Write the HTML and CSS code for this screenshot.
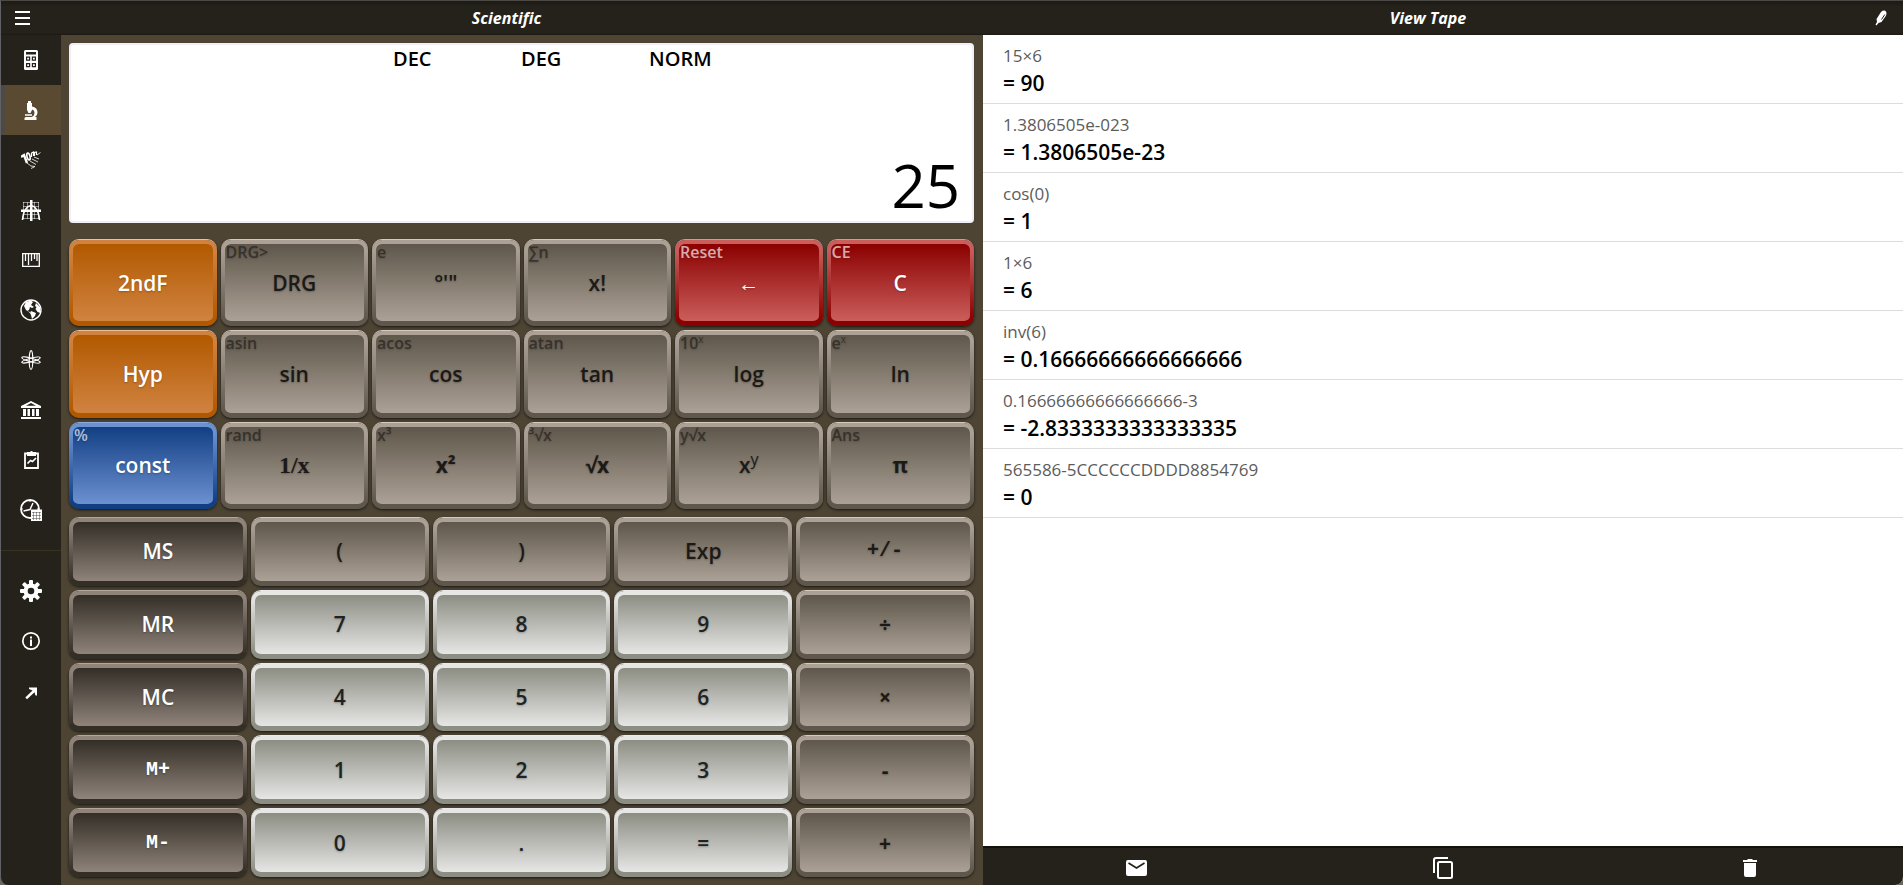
FILE: index.html
```html
<!DOCTYPE html>
<html lang="en">
<head>
  <meta charset="UTF-8" />
  <title>Scientific Calculator</title>
  <link rel="stylesheet" href="styles.css">
</head>
<body>
<div class="app">

  <header class="topbar">
    <div class="topbar-left">
      <button class="icon-btn menu" aria-label="Menu">
        <svg width="15" height="14" viewBox="0 0 15 14"><path d="M0 0h15v2H0zM0 6h15v2H0zM0 12h15v2H0z"/></svg>
      </button>
      <h1>Scientific</h1>
    </div>
    <div class="topbar-right">
      <h2>View Tape</h2>
      <button class="icon-btn edit" aria-label="Edit">
        <svg width="12" height="16" viewBox="0 0 12 16"><path d="M6 2Q9-.5 11 1.500q1 2-.2 4.500L6.500 12l-3 1L1.500 15.500.5 14.500 2 12 1.500 9z"/><path d="M9.800 4.500 6.500 9.500" stroke="#25221b" fill="none"/></svg>
      </button>
    </div>
  </header>

  <div class="main">
    <nav class="sidebar">
      <a href="#" aria-label="Standard">
        <svg width="14" height="20" viewBox="0 0 14 20"><rect width="14" height="20" rx="1.500"/><path class="hole" d="M2 2h10v2.500H2zM2 6.500h4.200v4.200H2zM7.800 6.500H12v4.200H7.800zM2 13h4.200v4.200H2zM7.800 13H12v4.200H7.800z"/><path d="M3.200 7.700h1.800v1.800H3.200zM9 7.700h1.800v1.800H9zM3.200 14.200h1.800V16H3.200zM9 14.200h1.800V16H9z"/></svg>
      </a>
      <a href="#" class="active" aria-label="Scientific">
        <svg width="14" height="19" viewBox="0 0 14 19"><path d="M4 0h3v2h1v7L6.500 12h-2L3 9V2h1z"/><path d="M8 5.500q5.500 1 5.500 6 0 3-2.500 4.500h1.500v3H.5v-2l1-1h6Q10.500 15 10.500 11.500 10.500 9 8 8.500zM1 13.200h7v1.500H1z"/></svg>
      </a>
      <a href="#" aria-label="Powers">
        <svg width="20" height="18" viewBox="0 0 20 18"><g class="line"><path d="M0 6l3-2 3 8" stroke-width="2.400"/><ellipse cx="7.500" cy="5.500" rx="1.500" ry="3.500" transform="rotate(-14 7.500 5.500)" stroke-width="1.700"/><path d="M10.500 6V2l2-1v4M13.500 5V1.500l2-.5v3" stroke-width="1.200"/><path d="M16 4l3.500-2.500M6 12l4 3 4 .5-4 2M9 10l6 3.500M11 8l6 3M13 6l5 2" stroke-width=".8"/></g></svg>
      </a>
      <a href="#" aria-label="Graphing">
        <svg width="20" height="21" viewBox="0 0 20 21"><path class="line" d="M2 2.500h16M2 6.500h16M2 14.500h16M2 18.500h16M2.500 2v17M6.500 2v17M13.500 2v17M17.500 2v17" stroke-width=".5"/><path class="line" d="M1.500 20C3 1 17 1 18.500 20" stroke-width="1.600"/><path d="M9 0h2.500v21H9zM0 9.500h20V12H0z"/></svg>
      </a>
      <a href="#" aria-label="Units">
        <svg width="18" height="14" viewBox="0 0 18 14"><path class="line" d="M.7.700h16.600v12.600H.7zM3.500 1v7M6.500 1v11M9.500 1v7M12.500 1v5M15 1v7" stroke-width="1.300"/></svg>
      </a>
      <a href="#" aria-label="World">
        <svg width="22" height="22" viewBox="0 0 22 22"><circle class="line" cx="11" cy="11" r="10" stroke-width="1.400"/><path d="M6 3l5-1.500 2 1.500-2 3 3 2-2 1-2-1-1 3-2 1 3 1v1L6 11 4 7zM11 12l5 2-1 3-3 3-1-4-1-2zM16 4l4 4 .5 6-3-1-2-3 1-2-1.500-1z"/></svg>
      </a>
      <a href="#" aria-label="Constants">
        <svg width="20" height="20" viewBox="0 0 20 20"><g class="line" stroke-width="1.200"><ellipse cx="10" cy="10" rx="1.800" ry="9.300"/><ellipse cx="10" cy="10" rx="1.800" ry="9.500" transform="rotate(75 10 10)"/><ellipse cx="10" cy="10" rx="1.800" ry="9.500" transform="rotate(-75 10 10)"/></g></svg>
      </a>
      <a href="#" aria-label="Finance">
        <svg width="20" height="18" viewBox="0 0 20 18"><path d="M10 0l10 5v2H0V5zM2 8h3v7H2zM6.500 8h2.500v7H6.500zM11 8h2.500v7H11zM15 8h3v7h-3zM0 16h20v2H0z"/><path class="hole" d="M10 2l5 2.800H5z"/></svg>
      </a>
      <a href="#" aria-label="Statistics">
        <svg width="15" height="18" viewBox="0 0 15 18"><path class="line" d="M1 2.500h13v14.500H1z" stroke-width="1.800"/><path d="M3 1h3q1.500-2 3 0h3v4H3z"/><path class="line" d="M3.500 12.500l3-3 2 1 3.500-3.500" stroke-width="1.700"/></svg>
      </a>
      <a href="#" aria-label="Date and time">
        <svg width="22" height="22" viewBox="0 0 22 22"><circle class="line" cx="10" cy="10" r="9" stroke-width="1.800"/><path class="line" d="M13 4l-3 6.500-6.500 1.500" stroke-width="1.500"/><path class="line" d="M10 2v1M2 10h1M17 10h1"/><path d="M11 10.500h11V22H11z"/><path class="grid-line" d="M13.500 13v8M16.500 13v8M19.500 13v8M12 13.500h9M12 16.500h9M12 19.500h9" stroke-width=".4"/></svg>
      </a>
      <hr>
      <a href="#" aria-label="Settings">
        <svg width="22" height="22" viewBox="0 0 22 22"><circle cx="11" cy="11" r="7.500"/><g id="teeth"><rect x="9" y="0" width="4" height="22" rx="1"/><rect x="0" y="9" width="22" height="4" rx="1"/></g><use href="#teeth" transform="rotate(45 11 11)"/><circle class="hole" cx="11" cy="11" r="3.300"/></svg>
      </a>
      <a href="#" aria-label="About">
        <svg width="20" height="20" viewBox="0 0 20 20"><circle class="line" cx="10" cy="10" r="8.200" stroke-width="1.700"/><path d="M9 5.500h2v2H9zM9 8.500h2V15H9z"/></svg>
      </a>
      <a href="#" class="share" aria-label="Share">
        <svg width="14" height="14" viewBox="0 0 14 14"><path d="M5 1.500h8v8h-1.500l-1-3.200-7.500 7L1.300 11.500l7.200-7L5 3z"/></svg>
      </a>
    </nav>

    <main class="calc">
      <section class="display">
        <div class="modes"><span>DEC</span><span>DEG</span><span>NORM</span></div>
        <output class="value">25</output>
      </section>

      <section class="keys functions">
        <button class="key orange">2ndF</button>
        <button class="key"><span class="second">DRG&gt;</span>DRG</button>
        <button class="key"><span class="second">e</span>°'"</button>
        <button class="key"><span class="second">∑n</span>x!</button>
        <button class="key red"><span class="second">Reset</span>←</button>
        <button class="key red"><span class="second">CE</span>C</button>

        <button class="key orange">Hyp</button>
        <button class="key"><span class="second">asin</span>sin</button>
        <button class="key"><span class="second">acos</span>cos</button>
        <button class="key"><span class="second">atan</span>tan</button>
        <button class="key"><span class="second">10<sup>x</sup></span>log</button>
        <button class="key"><span class="second">e<sup>x</sup></span>ln</button>

        <button class="key blue"><span class="second">%</span>const</button>
        <button class="key serif"><span class="second">rand</span>1/x</button>
        <button class="key bold"><span class="second">x³</span>x²</button>
        <button class="key bold"><span class="second">³√x</span>√x</button>
        <button class="key"><span class="second">y√x</span>x<sup>y</sup></button>
        <button class="key bold"><span class="second">Ans</span>π</button>
      </section>

      <section class="keys numbers">
        <button class="key memory">MS</button>
        <button class="key">(</button>
        <button class="key">)</button>
        <button class="key">Exp</button>
        <button class="key mono">+/-</button>

        <button class="key memory">MR</button>
        <button class="key digit">7</button>
        <button class="key digit">8</button>
        <button class="key digit">9</button>
        <button class="key bold">÷</button>

        <button class="key memory">MC</button>
        <button class="key digit">4</button>
        <button class="key digit">5</button>
        <button class="key digit">6</button>
        <button class="key bold">×</button>

        <button class="key memory mono">M+</button>
        <button class="key digit">1</button>
        <button class="key digit">2</button>
        <button class="key digit">3</button>
        <button class="key bold">-</button>

        <button class="key memory mono">M-</button>
        <button class="key digit">0</button>
        <button class="key digit">.</button>
        <button class="key digit">=</button>
        <button class="key bold">+</button>
      </section>
    </main>

    <aside class="tape">
      <ul>
        <li><span>15×6</span><strong>= 90</strong></li>
        <li><span>1.3806505e-023</span><strong>= 1.3806505e-23</strong></li>
        <li><span>cos(0)</span><strong>= 1</strong></li>
        <li><span>1×6</span><strong>= 6</strong></li>
        <li><span>inv(6)</span><strong>= 0.16666666666666666</strong></li>
        <li><span>0.16666666666666666-3</span><strong>= -2.8333333333333335</strong></li>
        <li><span>565586-5CCCCCCDDDD8854769</span><strong>= 0</strong></li>
      </ul>
      <footer class="tape-bar">
        <button class="icon-btn" aria-label="Mail">
          <svg width="21" height="16" viewBox="0 0 21 16"><rect width="21" height="16" rx="2"/><path class="grid-line" d="M2.500 3l8 5 8-5" stroke-width="1.700"/></svg>
        </button>
        <button class="icon-btn" aria-label="Copy">
          <svg width="20" height="22" viewBox="0 0 20 22"><path class="line" d="M1 16V3q0-2 2-2h12" stroke-width="2"/><rect class="line" x="5" y="5" width="14" height="16" rx="1.500" stroke-width="2"/></svg>
        </button>
        <button class="icon-btn" aria-label="Delete">
          <svg width="14" height="18" viewBox="0 0 14 18"><path d="M0 1h4l1-1h4l1 1h4v2H0zM1 4h12v12q0 2-2 2H3q-2 0-2-2z"/></svg>
        </button>
      </footer>
    </aside>
  </div>

</div>
</body>
</html>
```

FILE: styles.css
```css
* {
  box-sizing: border-box;
}

body {
  margin: 0;
  background: #6b6660;
  font-family: 'Segoe UI', 'Open Sans', 'Noto Sans', sans-serif;
  color: #000;
}

.app {
  display: flex;
  flex-direction: column;
  height: 100vh;
  min-height: 600px;
  border-top: 1px solid #4a4945;
  border-left: 1px solid #626266;
  border-radius: 0 0 8px 8px;
  overflow: hidden;
}

svg {
  display: block;
  fill: #fff;
}

.line {
  fill: none;
  stroke: #fff;
}

.hole {
  fill: #25221b;
}

.grid-line {
  fill: none;
  stroke: #25221b;
}

.icon-btn {
  display: flex;
  align-items: center;
  justify-content: center;
  padding: 0;
  border: none;
  background: none;
  cursor: pointer;
}

/* header */

.topbar {
  display: grid;
  grid-template-columns: 60px minmax(0, 922fr) minmax(0, 920fr);
  height: 34px;
  flex: none;
  background: linear-gradient(#1d1a14, #25221b 6px, #25221b 32px, #1b1812);
}

.topbar-left,
.topbar-right {
  display: flex;
  align-items: center;
}

.topbar-left {
  grid-column: 1 / 3;
  padding-left: 14px;
}

.topbar-right {
  padding-right: 14px;
}

.topbar h1,
.topbar h2 {
  flex: 1;
  margin: 0;
  text-align: center;
  font-size: 16px;
  font-weight: 700;
  font-style: italic;
  line-height: 34px;
  color: #fff;
}

.edit {
  width: 16px;
}

.main {
  display: grid;
  grid-template-columns: 60px minmax(0, 922fr) minmax(0, 920fr);
  flex: 1;
  min-height: 0;
}

/* sidebar */

.sidebar {
  background: #25221b;
}

.sidebar a {
  display: flex;
  align-items: center;
  justify-content: center;
  height: 50px;
}

.sidebar a.active {
  background: linear-gradient(to right, #4d4a45 4px, #5a4a31 4px);
}

.sidebar a.share {
  height: 54px;
}

.sidebar hr {
  height: 1px;
  margin: 15px 0;
  border: none;
  background: #38331f;
}

/* calculator */

.calc {
  display: flex;
  flex-direction: column;
  padding: 8px 9px 8px 8px;
  background: #4d4434;
}

.display {
  display: flex;
  flex-direction: column;
  justify-content: space-between;
  flex: 176 1 0;
  margin-bottom: 17px;
  border: 2px solid #f0eef9;
  border-radius: 4px;
  background: #fff;
}

.modes {
  display: flex;
  padding-left: 322px;
  font-size: 20px;
  font-weight: 600;
  line-height: 27px;
}

.modes span {
  width: 128px;
}

.value {
  padding: 0 12px;
  text-align: right;
  font-size: 60px;
  line-height: 72px;
}

.keys {
  display: grid;
  grid-auto-rows: 1fr;
  gap: 5px 4px;
}

.functions {
  grid-template-columns: repeat(6, 1fr);
  flex: 269 1 0;
  margin-bottom: 9px;
}

.numbers {
  grid-template-columns: repeat(5, 1fr);
  flex: 359 1 0;
}

.key {
  --light: #aca196;
  --dark: #5f574b;
  --edge: #d6cabd;
  position: relative;
  min-width: 0;
  padding: 0;
  border: solid transparent;
  border-width: 4px 4px 5px;
  border-radius: 10px;
  background:
    linear-gradient(var(--dark), var(--light)) padding-box,
    linear-gradient(var(--light) 10%, var(--dark) 92%) border-box;
  box-shadow: 0 -1px 0 var(--edge), 0 1px 3px rgba(0, 0, 0, 0.7);
  font-family: inherit;
  font-size: 21px;
  font-weight: 600;
  line-height: 28px;
  color: #1c1a17;
  text-shadow: 0 1px 2px rgba(0, 0, 0, 0.25);
  cursor: pointer;
}

.key sup {
  font-size: 16px;
  font-weight: 400;
  line-height: 0;
}

.key .second {
  position: absolute;
  top: -4px;
  left: 1px;
  font-family: 'Segoe UI', 'Open Sans', 'Noto Sans', sans-serif;
  font-size: 16px;
  font-weight: 600;
  line-height: 24px;
  opacity: 0.65;
}

.key .second sup {
  font-size: 10px;
}

.orange {
  --light: #d08340;
  --dark: #b25900;
  --edge: #e9c29b;
  color: #fff;
}

.blue {
  --light: #6c91d1;
  --dark: #123f84;
  --edge: #8ba9de;
  color: #fff;
}

.red {
  --light: #ca5e5b;
  --dark: #8b0000;
  --edge: #dc9590;
  color: #fff;
}

.memory {
  --light: #8f837a;
  --dark: #332e26;
  --edge: #b3a79c;
  color: #fff;
}

.digit {
  --light: #e6e6e5;
  --dark: #8c8e83;
  --edge: #e9e9ee;
  color: #202323;
}

.bold {
  font-weight: 700;
}

.serif {
  font-family: 'Liberation Serif', serif;
  font-size: 24px;
  font-weight: 700;
}

.mono {
  font-family: 'Liberation Mono', monospace;
  font-size: 20px;
  font-weight: 700;
}

/* tape */

.tape {
  display: flex;
  flex-direction: column;
  background: #fff;
}

.tape ul {
  flex: 1;
  margin: 0;
  padding: 0;
  list-style: none;
  overflow: auto;
}

.tape li {
  padding: 8px 20px 6px;
  border-bottom: 1px solid #dcdcdc;
}

.tape li span {
  display: block;
  font-size: 17px;
  line-height: 26px;
  color: #5c5c5c;
}

.tape li strong {
  display: block;
  font-size: 21px;
  font-weight: 600;
  line-height: 28px;
}

.tape-bar {
  display: flex;
  flex: none;
  height: 39px;
  padding-top: 4px;
  background: linear-gradient(#14120c 2px, #25221b 2px);
}

.tape-bar .icon-btn {
  flex: 1;
}
```
